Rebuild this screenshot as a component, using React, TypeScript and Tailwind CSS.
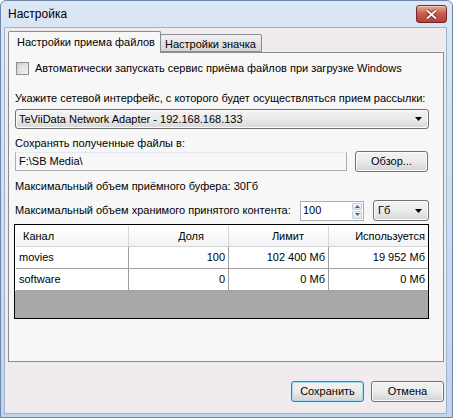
const ui = { fontFamily: '"Liberation Sans", Arial, sans-serif' };

interface Row {
  channel: string;
  share: string;
  limit: string;
  used: string;
}

const rows: Row[] = [
  { channel: "movies", share: "100", limit: "102 400 Мб", used: "19 952 Мб" },
  { channel: "software", share: "0", limit: "0 Мб", used: "0 Мб" },
];

function DownArrow() {
  return (
    <svg width="7" height="4" viewBox="0 0 7 4">
      <path d="M0 0h7L3.5 4z" fill="#000" />
    </svg>
  );
}

function CloseButton() {
  return (
    <div className="w-[31px] h-[18px] rounded-[3px] border border-[#6d2b2b] bg-gradient-to-b from-[#e9a99a] via-[#c9584a] to-[#b9403a] flex items-center justify-center shadow-[inset_0_1px_0_rgba(255,255,255,0.45)]">
      <svg width="13" height="11" viewBox="0 0 13 11">
        <path
          d="M2 1.5l4.5 4 4.5-4M2 9.5l4.5-4 4.5 4"
          stroke="#5a2424"
          strokeWidth="3.6"
          fill="none"
        />
        <path
          d="M2 1.5l4.5 4 4.5-4M2 9.5l4.5-4 4.5 4"
          stroke="#fff"
          strokeWidth="2"
          fill="none"
        />
      </svg>
    </div>
  );
}

function Button({ label, focused }: { label: string; focused?: boolean }) {
  return (
    <div
      className={
        "w-[73px] h-[21px] rounded-[3px] border flex items-center justify-center text-[11px] leading-[13px] bg-gradient-to-b from-[#f2f2f2] via-[#ebebeb] to-[#d3d3d3] " +
        (focused
          ? "border-[#3c7fb1] shadow-[inset_0_0_0_1px_#a6d9f4]"
          : "border-[#707070] shadow-[inset_0_0_0_1px_#fbfbfb]")
      }
    >
      {label}
    </div>
  );
}

function Spin() {
  return (
    <div className="w-[64px] h-[20px] border border-[#abadb3] bg-white flex">
      <span className="flex-1 pl-[2px] pt-[2px] leading-[13px]">100</span>
      <div className="w-[12px] flex flex-col gap-[1px] p-[1px]">
        <div className="flex-1 rounded-[1px] border border-[#c5cfdc] bg-gradient-to-b from-[#f3f6fa] to-[#dde5ef] flex items-center justify-center">
          <svg width="5" height="3" viewBox="0 0 5 3">
            <path d="M0 3h5L2.5 0z" fill="#4d6185" />
          </svg>
        </div>
        <div className="flex-1 rounded-[1px] border border-[#c5cfdc] bg-gradient-to-b from-[#f3f6fa] to-[#dde5ef] flex items-center justify-center">
          <svg width="5" height="3" viewBox="0 0 5 3">
            <path d="M0 0h5L2.5 3z" fill="#4d6185" />
          </svg>
        </div>
      </div>
    </div>
  );
}

function Table() {
  const cell = "h-[22px] flex items-center border-r border-b border-[#a0a0a0] px-[3px]";
  return (
    <div className="mt-[3px] -ml-[1px] h-[95px] border border-black bg-[#a9a8a9] flex flex-col">
      <div className="grid grid-cols-[113px_100px_100px_1fr] bg-gradient-to-b from-white to-[#f1f2f4] border-t border-l border-white">
        <div className="h-[21px] flex items-center border-r border-b border-[#d5d5d5] pl-[7px]">Канал</div>
        <div className="h-[21px] flex items-center justify-end border-r border-b border-[#d5d5d5] pr-[24px]">Доля</div>
        <div className="h-[21px] flex items-center justify-end border-r border-b border-[#d5d5d5] pr-[24px]">Лимит</div>
        <div className="h-[21px] flex items-center justify-end border-b border-[#d5d5d5] pr-[3px]">Используется</div>
      </div>
      {rows.map((r) => (
        <div key={r.channel} className="grid grid-cols-[113px_100px_100px_1fr] bg-white pl-[1px]">
          <div className={cell}>{r.channel}</div>
          <div className={cell + " justify-end"}>{r.share}</div>
          <div className={cell + " justify-end"}>{r.limit}</div>
          <div className={cell + " justify-end border-r-0"}>{r.used}</div>
        </div>
      ))}
    </div>
  );
}

export default function App() {
  return (
    <div
      className="w-[453px] h-[418px] flex flex-col bg-gradient-to-b from-[#dce7f5] to-[#c1d4ec] border border-[#6f86a6] rounded-t-[6px] overflow-hidden text-[11px] text-black"
      style={ui}
    >
      {/* title bar */}
      <div className="h-[26px] shrink-0 flex items-start pl-[7px] pr-[5px]">
        <span className="mt-[6px] text-[12px] leading-[15px] text-black">Настройка</span>
        <div className="ml-auto mt-[4px]">
          <CloseButton />
        </div>
      </div>

      {/* client area */}
      <div className="flex-1 mx-[3px] mr-[5px] mb-[3px] bg-[#efebef] border border-[#9fb2cb] flex flex-col pt-[3px] pl-[3px] pr-[2px]">
        {/* tabs */}
        <div className="flex items-end h-[21px] leading-[13px]">
          <div className="relative z-10 h-[22px] -mb-[1px] w-[153px] border border-b-0 border-[#898c95] bg-[#f7f7f7] rounded-t-[2px] pl-[8px] pt-[4px]">
            Настройки приема файлов
          </div>
          <div className="h-[18px] w-[102px] -ml-[1px] border border-[#898c95] bg-gradient-to-b from-[#f2f2f2] to-[#d6d6d6] rounded-t-[2px] pl-[4px] pt-[3px]">
            Настройки значка
          </div>
        </div>

        {/* tab page */}
        <div className="h-[310px] border border-[#898c95] bg-[#f7f7f7] pl-[6px] pr-[14px] flex flex-col leading-[13px]">
          <div className="mt-[8px] h-[14px] flex items-center">
            <div className="ml-[1px] w-[13px] h-[13px] border border-[#8e8f8f] bg-gradient-to-br from-[#cbcbcb] to-[#f6f6f6] p-[2px]">
              <div className="w-full h-full bg-gradient-to-br from-[#d9d9d9] to-[#f4f4f4] border border-[#e2e2e2]" />
            </div>
            <span className="ml-[6px]">
              Автоматически запускать сервис приёма файлов при загрузке Windows
            </span>
          </div>

          <div className="mt-[17px]">
            Укажите сетевой интерфейс, с которого будет осуществляться прием рассылки:
          </div>

          <div className="mt-[4px] h-[20px] rounded-[3px] border border-[#707070] bg-gradient-to-b from-[#f2f2f2] via-[#ebebeb] to-[#d7d7d7] flex items-center pl-[3px] pr-[6px] shadow-[inset_0_0_0_1px_#fcfcfc]">
            <span className="flex-1">TeViiData Network Adapter - 192.168.168.133</span>
            <DownArrow />
          </div>

          <div className="mt-[8px]">Сохранять полученные файлы в:</div>

          <div className="mt-[1px] h-[21px] flex items-center">
            <div className="flex-1 h-[19px] border border-[#abadb3] border-t-[#e3e9ef] bg-[#f7f7f7] flex items-center pl-[3px]">
              F:\SB Media\
            </div>
            <div className="ml-[8px] mr-[1px]">
              <Button label="Обзор..." />
            </div>
          </div>

          <div className="mt-[8px]">Максимальный объем приёмного буфера: 30Гб</div>

          <div className="mt-[7px] h-[21px] flex items-center">
            <span className="flex-1">Максимальный объем хранимого принятого контента:</span>
            <Spin />
            <div className="ml-[9px] w-[56px] h-[21px] rounded-[3px] border border-[#707070] bg-gradient-to-b from-[#f2f2f2] via-[#ebebeb] to-[#d7d7d7] flex items-center pl-[4px] pr-[6px] shadow-[inset_0_0_0_1px_#fcfcfc]">
              <span className="flex-1">Гб</span>
              <DownArrow />
            </div>
          </div>

          <Table />
        </div>

        {/* dialog buttons */}
        <div className="mt-[19px] flex justify-end gap-[7px] leading-[13px]">
          <Button label="Сохранить" focused />
          <Button label="Отмена" />
        </div>
      </div>
    </div>
  );
}
